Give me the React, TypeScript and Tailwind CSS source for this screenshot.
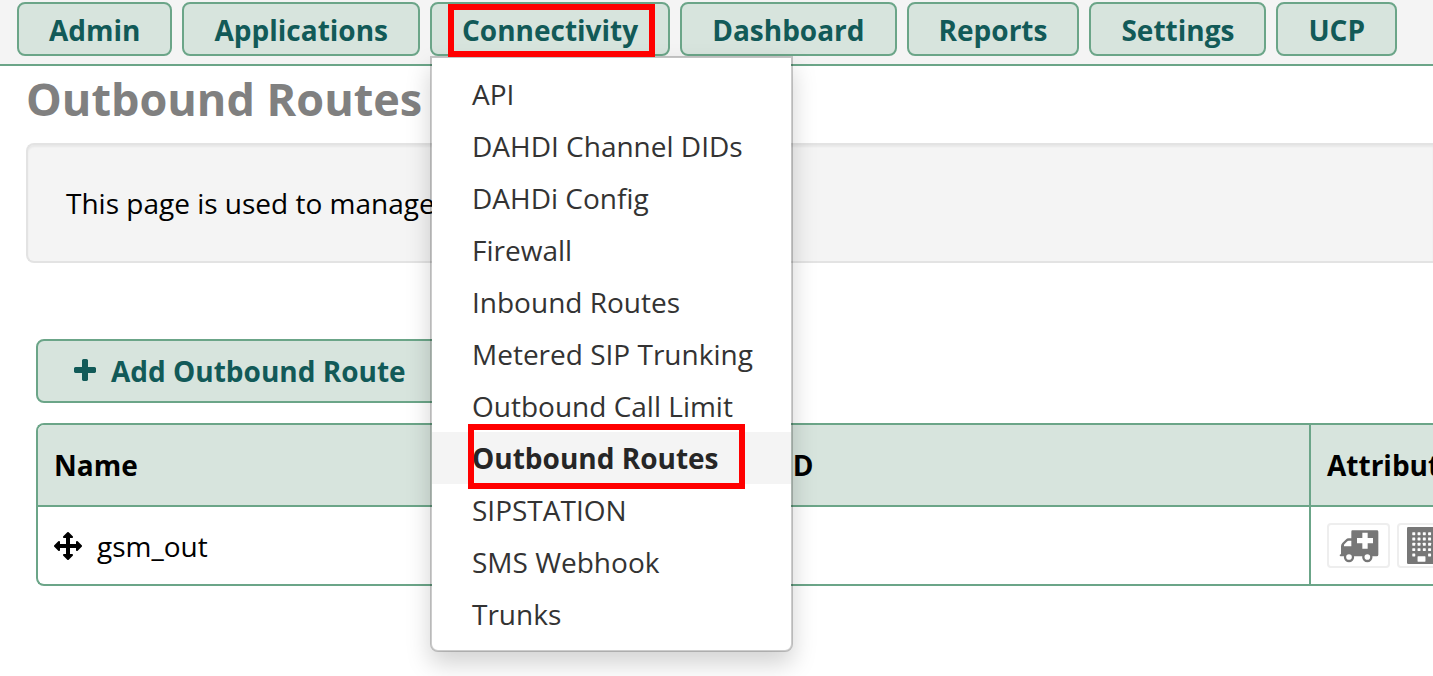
const navItems = ['Admin', 'Applications', 'Connectivity', 'Dashboard', 'Reports', 'Settings', 'UCP'];

const menuItems = [
  'API',
  'DAHDI Channel DIDs',
  'DAHDi Config',
  'Firewall',
  'Inbound Routes',
  'Metered SIP Trunking',
  'Outbound Call Limit',
  'Outbound Routes',
  'SIPSTATION',
  'SMS Webhook',
  'Trunks',
];

function PlusIcon() {
  return (
    <svg className="size-7 shrink-0" viewBox="0 0 1792 1792" fill="currentColor" aria-hidden="true">
      <path d="M1600 736v192q0 40-28 68t-68 28h-416v416q0 40-28 68t-68 28h-192q-40 0-68-28t-28-68v-416h-416q-40 0-68-28t-28-68v-192q0-40 28-68t68-28h416v-416q0-40 28-68t68-28h192q40 0 68 28t28 68v416h416q40 0 68 28t28 68z" />
    </svg>
  );
}

function MoveIcon() {
  return (
    <svg className="size-7 shrink-0" viewBox="0 0 1792 1792" fill="currentColor" aria-hidden="true">
      <path d="M1792 896q0 26-19 45l-256 256q-19 19-45 19t-45-19-19-45v-128h-384v384h128q26 0 45 19t19 45-19 45l-256 256q-19 19-45 19t-45-19l-256-256q-19-19-19-45t19-45 45-19h128v-384h-384v128q0 26-19 45t-45 19-45-19l-256-256q-19-19-19-45t19-45l256-256q19-19 45-19t45 19 19 45v128h384v-384h-128q-26 0-45-19t-19-45 19-45l256-256q19-19 45-19t45 19l256 256q19 19 19 45t-19 45-45 19h-128v384h384v-128q0-26 19-45t45-19 45 19l256 256q19 19 19 45z" />
    </svg>
  );
}

function AmbulanceIcon() {
  return (
    <svg className="h-[34px] w-10 shrink-0" viewBox="147 356 120 102" aria-hidden="true">
      <path
        fill="#777"
        fillRule="evenodd"
        d="M187 360h74q4 0 4 4v69q0 5-5 5H152q-3 0-3-3t4-3v-24q0-6 4-10l10-10q4-4 9-4h8v-20q0-4 3-4zM162 408h22v-17h-8q-2 0-4 2l-9 9q-1 1-1 3zM217 367v16h-16v16h16v16h16v-16h16v-16h-16v-16z"
      />
      <circle cx="177" cy="440" r="12" fill="#fff" stroke="#777" strokeWidth="7" />
      <circle cx="232" cy="440" r="12" fill="#fff" stroke="#777" strokeWidth="7" />
    </svg>
  );
}

function BuildingIcon() {
  const windows: [number, number][] = [];
  for (let row = 0; row < 5; row++) {
    for (let col = 0; col < 4; col++) {
      if (row < 4 || col === 0 || col === 3) windows.push([256 + col * 256, 256 + row * 256]);
    }
  }
  return (
    <svg className="h-[37px] w-[29px] shrink-0" viewBox="0 0 1408 1792" aria-hidden="true">
      <rect width="1408" height="1792" rx="64" fill="#777" />
      {windows.map(([x, y]) => (
        <rect key={`${x}-${y}`} x={x} y={y} width="144" height="144" rx="24" fill="#fff" />
      ))}
      <rect x="512" y="1420" width="384" height="270" rx="24" fill="#fff" />
    </svg>
  );
}

function ConnectivityMenu() {
  return (
    <ul className="absolute top-[54px] left-0 z-10 w-[363px] rounded-b-lg border-2 border-black/20 bg-white bg-clip-padding py-2.5 shadow-[0_12px_24px_rgba(0,0,0,0.175)]">
      {menuItems.map((item) => {
        const active = item === 'Outbound Routes';
        return (
          <li key={item} className="relative">
            <a
              href="#"
              className={
                active
                  ? 'block bg-[#f4f4f4] px-10 text-[28px] leading-[52px] font-bold whitespace-nowrap text-[#262626]'
                  : 'block px-10 text-[28px] leading-[52px] whitespace-nowrap text-[#333]'
              }
            >
              {item}
            </a>
            {active && (
              <span className="pointer-events-none absolute -top-2 left-9 h-[65px] w-[277px] border-[6px] border-[#f00]" />
            )}
          </li>
        );
      })}
    </ul>
  );
}

export default function App() {
  return (
    <div className="min-h-screen overflow-hidden bg-white pb-20 font-['Open_Sans',sans-serif] text-[28px] leading-10 text-black">
      <nav className="flex gap-2.5 border-b-2 border-[#6ba588] bg-[#f4f4f4] px-[17px] pt-0.5 pb-2">
        {navItems.map((item) => (
          <div key={item} className="relative shrink-0">
            <button
              type="button"
              className="block h-[54px] rounded-lg border-2 border-[#6ba588] bg-[#d7e4dd] px-[30px] pt-0.5 leading-[48px] font-bold text-[#125a58]"
            >
              {item}
            </button>
            {item === 'Connectivity' && (
              <>
                <ConnectivityMenu />
                <span className="pointer-events-none absolute top-0.5 left-[18px] z-20 h-[53px] w-[207px] border-[6px] border-[#f00]" />
              </>
            )}
          </div>
        ))}
      </nav>

      <main className="pl-[26px]">
        <h1 className="pt-[7px] text-[45px] leading-[52px] font-bold text-[#808080]">Outbound Routes</h1>

        <div className="mt-[18px] rounded-l-lg border-2 border-r-0 border-[#e3e3e3] bg-[#f4f4f4] px-[38px] py-[38px] shadow-[inset_0_2px_2px_rgba(0,0,0,0.05)]">
          <p>This page is used to manage</p>
        </div>

        <div className="pt-[76px] pl-2.5">
          <button
            type="button"
            className="flex h-16 items-center gap-3 rounded-lg border-2 border-[#6ba588] bg-[#d7e4dd] px-[33px] font-bold text-[#125a58]"
          >
            <PlusIcon />
            Add Outbound Route
          </button>

          <div className="mt-5 overflow-hidden rounded-l-lg border-2 border-r-0 border-[#6ba588]">
            <table className="w-full table-fixed border-collapse text-left">
              <colgroup>
                <col className="w-[562px]" />
                <col />
                <col className="w-[123px]" />
              </colgroup>
              <thead>
                <tr className="h-[81px] border-b-2 border-[#6ba588] bg-[#d7e4dd]">
                  <th className="px-4 font-bold">Name</th>
                  <th className="px-4 font-bold">Outbound CID</th>
                  <th className="border-l-2 border-[#6ba588] pl-4 font-bold">Attributes</th>
                </tr>
              </thead>
              <tbody>
                <tr className="h-[78px]">
                  <td className="px-4">
                    <div className="flex items-center gap-[15px]">
                      <MoveIcon />
                      gsm_out
                    </div>
                  </td>
                  <td />
                  <td className="border-l-2 border-[#6ba588] pl-4">
                    <div className="flex gap-[7px]">
                      <span className="flex h-[45px] w-[63px] shrink-0 items-center justify-center rounded border-2 border-[#eee]">
                        <AmbulanceIcon />
                      </span>
                      <span className="flex h-[45px] w-[49px] shrink-0 items-center justify-center rounded border-2 border-[#eee]">
                        <BuildingIcon />
                      </span>
                    </div>
                  </td>
                </tr>
              </tbody>
            </table>
          </div>
        </div>
      </main>
    </div>
  );
}
